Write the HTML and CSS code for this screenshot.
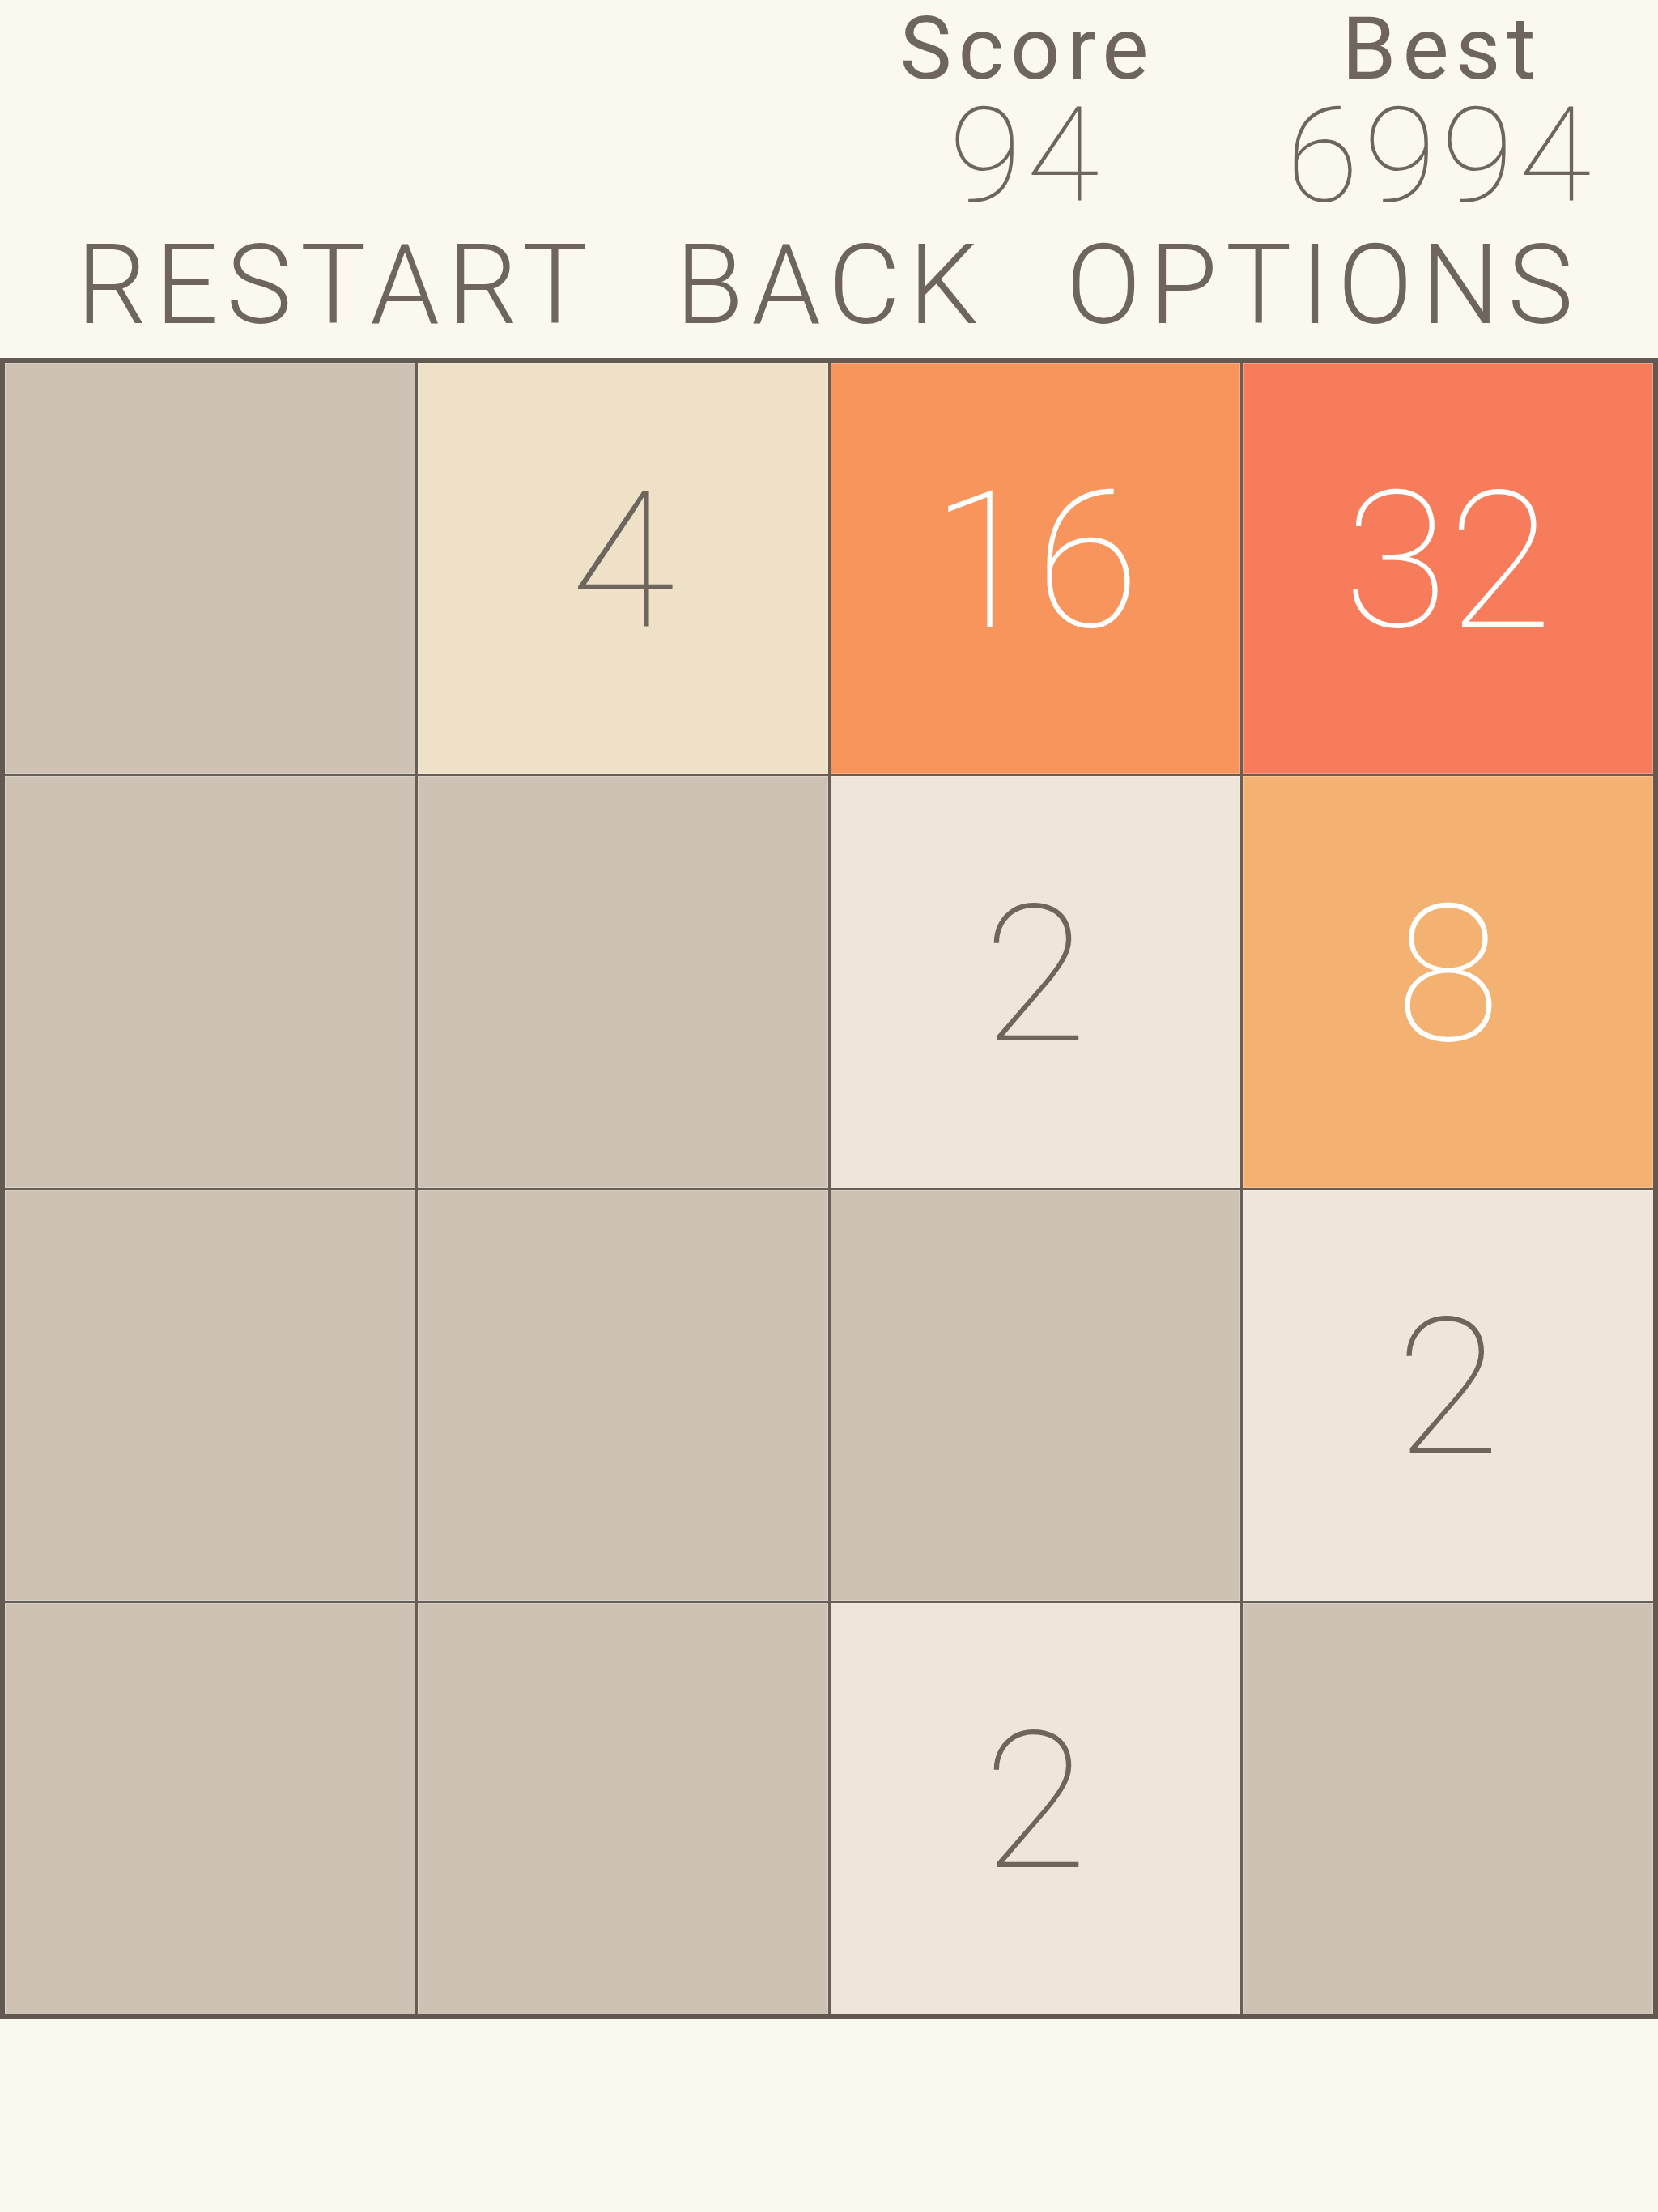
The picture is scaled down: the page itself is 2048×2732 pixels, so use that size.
FILE: index.html
```html
<!DOCTYPE html>
<html lang="en">
<head>
  <meta charset="UTF-8">
  <meta name="viewport" content="width=device-width, initial-scale=1.0">
  <title>2048</title>
  <link rel="stylesheet" href="styles.css">
</head>
<body>

<header class="top">
  <div class="scores">
    <div class="score-box">
      <span class="label">Score</span>
      <span class="value">94</span>
    </div>
    <div class="score-box">
      <span class="label">Best</span>
      <span class="value">6994</span>
    </div>
  </div>
  <nav class="menu">
    <a href="#">RESTART</a>
    <a href="#">BACK</a>
    <a href="#">OPTIONS</a>
  </nav>
</header>

<div class="board">
  <div class="cell"></div>
  <div class="cell t4">4</div>
  <div class="cell t16">16</div>
  <div class="cell t32">32</div>

  <div class="cell"></div>
  <div class="cell"></div>
  <div class="cell t2">2</div>
  <div class="cell t8">8</div>

  <div class="cell"></div>
  <div class="cell"></div>
  <div class="cell"></div>
  <div class="cell t2">2</div>

  <div class="cell"></div>
  <div class="cell"></div>
  <div class="cell t2">2</div>
  <div class="cell"></div>
</div>

</body>
</html>
```

FILE: styles.css
```css
* {
  margin: 0;
  padding: 0;
  box-sizing: border-box;
}

body {
  background: #FBF8EF;
  color: #6E665C;
  font-family: Roboto, "Helvetica Neue", "Liberation Sans", sans-serif;
  width: 2048px;
  height: 2732px;
}

.top {
  display: flex;
  flex-direction: column;
  padding-top: 8px;
  height: 442px;
}

.scores {
  display: flex;
  justify-content: flex-end;
  padding-right: 15px;
}

.score-box {
  width: 512px;
  display: flex;
  flex-direction: column;
  align-items: center;
}

.score-box .label {
  font-size: 108px;
  line-height: 104px;
  font-weight: 400;
  letter-spacing: 8px;
  padding-left: 8px;
}

.score-box .value {
  font-size: 164px;
  line-height: 160px;
  font-weight: 100;
  letter-spacing: 6px;
  padding-left: 6px;
}

.menu {
  display: flex;
  justify-content: center;
  gap: 98px;
  margin-top: 12px;
}

.menu a {
  color: #6E665C;
  text-decoration: none;
  font-size: 137px;
  line-height: 137px;
  font-weight: 300;
  letter-spacing: 10px;
}

.board {
  display: grid;
  grid-template-columns: repeat(4, 1fr);
  grid-template-rows: repeat(4, 1fr);
  gap: 3px;
  width: 2048px;
  height: 2052px;
  background: #675F56;
  border: 6px solid #625A51;
}

.cell {
  background: #CEC2B4;
  box-shadow: inset 0 0 0 1px rgba(255, 255, 255, 0.25);
  display: flex;
  align-items: center;
  justify-content: center;
  padding-bottom: 16px;
  font-size: 236px;
  line-height: 236px;
  font-weight: 100;
  color: #6E665C;
}

.cell.t2 { background: #EFE5DB; }
.cell.t4 { background: #EFE1C7; }
.cell.t8 { background: #F3B172; color: #FFFFFF; }
.cell.t16 { background: #F7955D; color: #FFFFFF; }
.cell.t32 { background: #F77C5B; color: #FFFFFF; }
```
